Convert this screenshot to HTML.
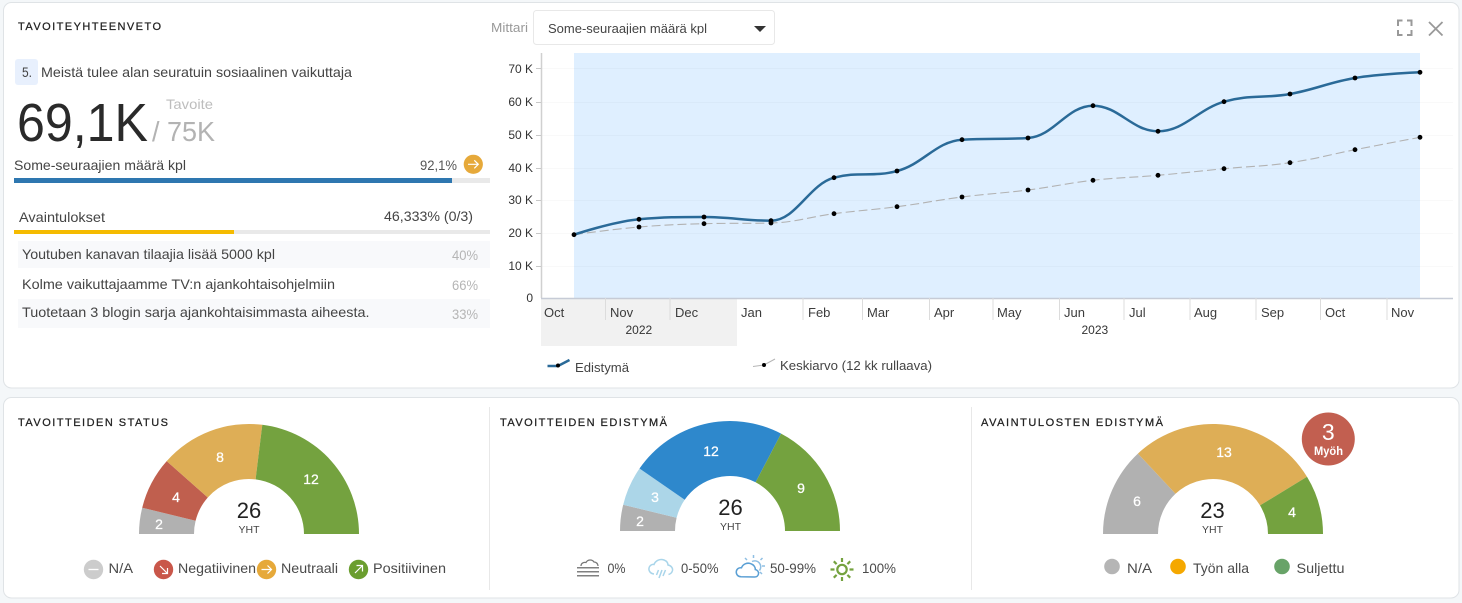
<!DOCTYPE html>
<html lang="fi"><head><meta charset="utf-8"><title>Tavoiteyhteenveto</title>
<style>
html,body{margin:0;padding:0;background:#f4f7f9;width:1462px;height:603px;overflow:hidden}
svg{display:block;position:absolute;left:0;top:0}
text{font-family:"Liberation Sans",Arial,sans-serif;fill:#444;font-size:14px}
.h{font-size:11px;fill:#222;stroke:#222;stroke-width:.25}
.m{font-size:13px;fill:#3c3c3c}
.y{font-size:12px;fill:#333;text-anchor:end}
.yr{font-size:12px;fill:#333}
.g{font-size:14px;fill:#fff;text-anchor:middle;stroke:#fff;stroke-width:.25}
.c{font-size:22px;fill:#222;text-anchor:middle}
.t{font-size:10.5px;fill:#444;text-anchor:middle}
.p{font-size:14px;fill:#b5b5b5}
.l{font-size:14px;fill:#4a4a4a}
</style></head><body>
<svg width="1462" height="603" viewBox="0 0 1462 603" xmlns="http://www.w3.org/2000/svg">
<defs><clipPath id="sel"><rect x="534" y="11" width="240" height="23.5"/></clipPath></defs>
<rect x="3.5" y="2.5" width="1455.5" height="385.5" rx="8" fill="#fff" stroke="#dfe3e6"/>
<rect x="3.5" y="397.5" width="1455.5" height="200.5" rx="8" fill="#fff" stroke="#dfe3e6"/>

<text class="h" x="18" y="30" textLength="143" lengthAdjust="spacing">TAVOITEYHTEENVETO</text>
<rect x="15" y="59" width="23" height="26" rx="3" fill="#e8f0fd"/>
<text x="22" y="77" textLength="10" lengthAdjust="spacingAndGlyphs">5.</text>
<text x="41" y="77" textLength="311" lengthAdjust="spacingAndGlyphs">Meistä tulee alan seuratuin sosiaalinen vaikuttaja</text>
<text x="17" y="141" style="font-size:54px;fill:#2a2a2a" textLength="131" lengthAdjust="spacingAndGlyphs">69,1K</text>
<text x="166" y="109" style="fill:#bdbdbd" textLength="47" lengthAdjust="spacingAndGlyphs">Tavoite</text>
<text x="152" y="141" style="font-size:28px;fill:#b3b3b3" textLength="63" lengthAdjust="spacingAndGlyphs">/ 75K</text>
<text x="14" y="170" textLength="172" lengthAdjust="spacingAndGlyphs">Some-seuraajien määrä kpl</text>
<text x="420" y="170" style="fill:#555" textLength="37" lengthAdjust="spacingAndGlyphs">92,1%</text>
<circle cx="473.3" cy="164.3" r="9.6" fill="#e6a93a"/>
<path d="M468 164.3h10M474.3 160.3l4 4-4 4" fill="none" stroke="#fff" stroke-width="1.2"/>
<rect x="14" y="178" width="476" height="5" fill="#e9e9e9"/>
<rect x="14" y="178" width="438" height="5" fill="#2e77b0"/>

<text x="19" y="222" textLength="86" lengthAdjust="spacingAndGlyphs">Avaintulokset</text>
<text x="384" y="221" textLength="89" lengthAdjust="spacingAndGlyphs">46,333% (0/3)</text>
<rect x="14" y="230" width="476" height="4" fill="#e9e9e9"/>
<rect x="14" y="230" width="220" height="4" fill="#f5bb00"/>
<rect x="18" y="241" width="472" height="27" fill="#f8f9fb"/>
<rect x="18" y="299" width="472" height="29" fill="#f8f9fb"/>
<text x="22" y="259" textLength="253" lengthAdjust="spacingAndGlyphs">Youtuben kanavan tilaajia lisää 5000 kpl</text>
<text x="22" y="289" textLength="313" lengthAdjust="spacingAndGlyphs">Kolme vaikuttajaamme TV:n ajankohtaisohjelmiin</text>
<text x="22" y="317" textLength="347.5" lengthAdjust="spacingAndGlyphs">Tuotetaan 3 blogin sarja ajankohtaisimmasta aiheesta.</text>
<text class="p" x="452" y="260" textLength="26" lengthAdjust="spacingAndGlyphs">40%</text>
<text class="p" x="452" y="290" textLength="26" lengthAdjust="spacingAndGlyphs">66%</text>
<text class="p" x="452" y="319" textLength="26" lengthAdjust="spacingAndGlyphs">33%</text>

<text x="491" y="32" style="font-size:13px;fill:#999" textLength="37" lengthAdjust="spacingAndGlyphs">Mittari</text>
<rect x="533.5" y="10.5" width="241" height="34" rx="3" fill="#fff" stroke="#e8e8e8"/>
<text x="548" y="33" clip-path="url(#sel)" style="font-size:13px;fill:#444" textLength="159" lengthAdjust="spacingAndGlyphs">Some-seuraajien määrä kpl</text>
<path d="M754 26h12l-6 6z" fill="#333"/>
<path d="M1398 26v-5.500h4.500M1407 20.500h4.500V26M1411.500 30v5H1407M1402.500 35H1398V30" fill="none" stroke="#999" stroke-width="2"/>
<path d="M1429 22l13.500 13.500M1442.500 22L1429 35.500" fill="none" stroke="#999" stroke-width="1.800"/>

<!-- chart -->
<rect x="574" y="53" width="846" height="245" fill="#dfefff"/>
<g stroke="#000" stroke-opacity=".025" stroke-width="1">
<path d="M541 68.500H1453M541 102.500H1453M541 135.500H1453M541 168.500H1453M541 200.500H1453M541 233.500H1453M541 266.500H1453"/>
</g>
<rect x="541" y="299" width="196" height="47" fill="#f1f1f1"/>
<path d="M541.500 53V298" stroke="#d0d0d0" stroke-width="1.500"/>
<path d="M536 68.500h5M536 102.500h5M536 135.500h5M536 168.500h5M536 200.500h5M536 233.500h5M536 266.500h5" stroke="#c8c8c8"/>
<path d="M541 298.500H1453" stroke="#c6cbd6" stroke-width="1.500"/>
<path d="M605.500 298v22M670 298v22M803 298v22M862.500 298v22M929.500 298v22M993 298v22M1059.500 298v22M1124 298v22M1190 298v22M1256 298v22M1320.500 298v22M1387 298v22" stroke="#dcdcdc" stroke-width="1"/>

<g>
<text class="y" x="533" y="73">70 K</text><text class="y" x="533" y="106">60 K</text><text class="y" x="533" y="139">50 K</text><text class="y" x="533" y="172">40 K</text><text class="y" x="533" y="204">30 K</text><text class="y" x="533" y="237">20 K</text><text class="y" x="533" y="270">10 K</text><text class="y" x="533" y="302">0</text>
<text class="m" x="544" y="317">Oct</text><text class="m" x="610" y="317">Nov</text><text class="m" x="675" y="317">Dec</text><text class="m" x="741" y="317">Jan</text><text class="m" x="808" y="317">Feb</text><text class="m" x="867" y="317">Mar</text><text class="m" x="934" y="317">Apr</text><text class="m" x="997" y="317">May</text><text class="m" x="1064" y="317">Jun</text><text class="m" x="1129" y="317">Jul</text><text class="m" x="1194" y="317">Aug</text><text class="m" x="1261" y="317">Sep</text><text class="m" x="1325" y="317">Oct</text><text class="m" x="1391" y="317">Nov</text>
<text class="yr" x="625.500" y="334">2022</text><text class="yr" x="1081.500" y="334">2023</text>
</g>

<path fill="none" stroke="#b2b2b2" stroke-width="1.100" stroke-dasharray="9 4" d="M574 234.700C574 234.700 613 229.200 639 227C665 224.800 678 224.400 704 223.700C730 223 745 223.700 771 223C796 222.300 809 217 834 213.700C859 210.400 872 210 897 206.700C923 203.400 936 200.300 962 197C988 193.700 1002 193.300 1028 190C1054 186.700 1067 183.200 1093 180.300C1119 177.400 1132 177.600 1158 175.300C1184 173 1198 171.200 1224 168.700C1250 166.200 1264 166.500 1290 162.700C1316 158.900 1329 154.800 1355 149.700C1381 144.600 1420 137.300 1420 137.300"/>
<path fill="none" stroke="#2a6a98" stroke-width="2.500" d="M574 234.700C574 234.700 613 221.600 639 219.300C665 217 678 217 704 217C730 217 745 220.700 771 220.700C796 220.700 809 184.400 834 177.700C859 171 872 177.700 897 171C923 164.300 936 141.400 962 139.700C988 138 1002 139.700 1028 138C1054 136.300 1067 105.700 1093 105.700C1119 105.700 1132 131.300 1158 131.300C1184 131.300 1198 109.200 1224 101.700C1250 94.200 1264 98.700 1290 94C1316 89.300 1329 82.300 1355 78C1381 73.700 1420 72.300 1420 72.300"/>
<g fill="#000">
<circle cx="574" cy="234.700" r="2.400"/><circle cx="639" cy="227" r="2.400"/><circle cx="704" cy="223.700" r="2.400"/><circle cx="771" cy="223" r="2.400"/><circle cx="834" cy="213.700" r="2.400"/><circle cx="897" cy="206.700" r="2.400"/><circle cx="962" cy="197" r="2.400"/><circle cx="1028" cy="190" r="2.400"/><circle cx="1093" cy="180.300" r="2.400"/><circle cx="1158" cy="175.300" r="2.400"/><circle cx="1224" cy="168.700" r="2.400"/><circle cx="1290" cy="162.700" r="2.400"/><circle cx="1355" cy="149.700" r="2.400"/><circle cx="1420" cy="137.300" r="2.400"/>
<circle cx="639" cy="219.300" r="2.400"/><circle cx="704" cy="217" r="2.400"/><circle cx="771" cy="220.700" r="2.400"/><circle cx="834" cy="177.700" r="2.400"/><circle cx="897" cy="171" r="2.400"/><circle cx="962" cy="139.700" r="2.400"/><circle cx="1028" cy="138" r="2.400"/><circle cx="1093" cy="105.700" r="2.400"/><circle cx="1158" cy="131.300" r="2.400"/><circle cx="1224" cy="101.700" r="2.400"/><circle cx="1290" cy="94" r="2.400"/><circle cx="1355" cy="78" r="2.400"/><circle cx="1420" cy="72.300" r="2.400"/>
</g>

<path d="M547.500 366H558L569.500 360" fill="none" stroke="#2a6a98" stroke-width="2.500"/><circle cx="558" cy="365.500" r="2" fill="#000"/>
<text x="575" y="372" style="font-size:13px" textLength="54" lengthAdjust="spacingAndGlyphs">Edistymä</text>
<path d="M753 366.500L764 365L775 359" fill="none" stroke="#b5b5b5" stroke-width="1"/><circle cx="764" cy="365" r="2" fill="#000"/>
<text x="780" y="370" style="font-size:13px" textLength="152" lengthAdjust="spacingAndGlyphs">Keskiarvo (12 kk rullaava)</text>

<!-- separators -->
<path d="M489.500 407V590M971.500 407V590" stroke="#e8e8e8"/>

<!-- gauge 1 -->
<text class="h" x="18" y="426" textLength="150" lengthAdjust="spacing">TAVOITTEIDEN STATUS</text>
<path fill="#b1b1b1" d="M139 534A110 110 0 0 1 142.200 507.700L195.600 520.800A55 55 0 0 0 194 534Z"/>
<path fill="#c05f4e" d="M142.200 507.700A110 110 0 0 1 166.700 461.100L207.800 497.500A55 55 0 0 0 195.600 520.800Z"/>
<path fill="#deae56" d="M166.700 461.100A110 110 0 0 1 262.300 424.800L255.600 479.400A55 55 0 0 0 207.800 497.500Z"/>
<path fill="#74a23f" d="M262.300 424.800A110 110 0 0 1 359 534H304A55 55 0 0 0 255.600 479.400Z"/>
<text class="g" x="159" y="529">2</text><text class="g" x="176" y="502">4</text><text class="g" x="220" y="462">8</text><text class="g" x="311" y="484">12</text>
<text class="c" x="249" y="518">26</text><text class="t" x="249" y="533">YHT</text>

<circle cx="93.500" cy="569.500" r="9.700" fill="#ccc"/><path d="M88.500 569.500h10" stroke="#fff" stroke-width="1.300"/>
<text class="l" x="108.500" y="573" textLength="24.500" lengthAdjust="spacingAndGlyphs">N/A</text>
<circle cx="163.500" cy="569.500" r="9.700" fill="#c9574a"/><path d="M160 566l7 7M167.500 568v5.500H162" fill="none" stroke="#fff" stroke-width="1.200"/>
<text class="l" x="178" y="573" textLength="78" lengthAdjust="spacingAndGlyphs">Negatiivinen</text>
<circle cx="266.500" cy="569.500" r="9.700" fill="#e6a93a"/><path d="M261.500 569.500h10M267.500 565.500l4 4-4 4" fill="none" stroke="#fff" stroke-width="1.200"/>
<text class="l" x="281" y="573" textLength="57" lengthAdjust="spacingAndGlyphs">Neutraali</text>
<circle cx="358.500" cy="569.500" r="9.700" fill="#6b9e2f"/><path d="M355 573l7-7M356.500 565.500h6V571.500" fill="none" stroke="#fff" stroke-width="1.200"/>
<text class="l" x="373" y="573" textLength="73" lengthAdjust="spacingAndGlyphs">Positiivinen</text>

<!-- gauge 2 -->
<text class="h" x="500" y="426" textLength="167" lengthAdjust="spacing">TAVOITTEIDEN EDISTYMÄ</text>
<path fill="#b1b1b1" d="M620 531A110 110 0 0 1 623.200 504.700L676.600 517.800A55 55 0 0 0 675 531Z"/>
<path fill="#acd6e8" d="M623.200 504.700A110 110 0 0 1 639.500 468.500L684.700 499.800A55 55 0 0 0 676.600 517.800Z"/>
<path fill="#2e88cc" d="M639.500 468.500A110 110 0 0 1 781.100 433.600L755.600 482.300A55 55 0 0 0 684.700 499.800Z"/>
<path fill="#74a23f" d="M781.100 433.600A110 110 0 0 1 840 531H785A55 55 0 0 0 755.600 482.300Z"/>
<text class="g" x="640" y="526">2</text><text class="g" x="655" y="502">3</text><text class="g" x="711" y="456">12</text><text class="g" x="801" y="493">9</text>
<text class="c" x="730.500" y="515">26</text><text class="t" x="730.500" y="530">YHT</text>

<g fill="none">
<path d="M581 566C581 563 584 562 586 562.500C587.500 559.500 592 559 594 562C596.500 562 598 564 598 566" stroke="#777" stroke-width="1.300"/>
<path d="M577 567.700H599M577 571.700H599M577 575.700H599" stroke="#808080" stroke-width="1.500"/>
</g>
<text class="l" style="font-size:13.500px" x="607.500" y="573" textLength="18" lengthAdjust="spacingAndGlyphs">0%</text>
<g fill="none" stroke="#a9d5ea" stroke-width="1.500">
<path d="M654 574C650 573.500 648.500 570.500 649 568C649.500 565.500 652 564 654 564.500C655.500 560.500 660 558.500 664 560C666.500 561 668 563 668 565C671 565.500 673 568 672.500 570.500C672 572.500 670.500 574 668.500 574.500"/>
<path d="M658.500 570l-2 5M662 570l-3 8M665.500 570l-2.500 6"/>
</g>
<text class="l" x="681" y="573" textLength="37.500" lengthAdjust="spacingAndGlyphs">0-50%</text>
<g fill="none">
<path d="M752 561.500a6 6 0 0 1 7.500 9M753.500 558v-3M747 560l-2-2M760.500 560l2-2M762 566h3M760 572l2 2" stroke="#8fbfe3" stroke-width="1.500"/>
<path d="M741 576.800C737.500 576.500 736 574 736.300 571.500C736.600 569 739 567.300 741.500 567.800C743 564 747.500 562 751.500 564C754 565 755.500 567.500 755.300 569.500C757.500 570 759 572 758.500 574C758 576 756.500 577 754.500 577Z" stroke="#5a9fd4" stroke-width="1.500" fill="#fff"/>
</g>
<text class="l" x="770" y="573" textLength="46" lengthAdjust="spacingAndGlyphs">50-99%</text>
<g fill="none" stroke="#74a23f" stroke-width="2.200">
<circle cx="842" cy="569.500" r="4.700"/>
<path d="M842 558v4M842 577v4M830.500 569.500h4M849.500 569.500h4M833.800 561.300l2.800 2.800M847.400 574.900l2.800 2.800M850.200 561.300l-2.800 2.800M836.600 574.900l-2.800 2.800"/>
</g>
<text class="l" x="862" y="573" textLength="34" lengthAdjust="spacingAndGlyphs">100%</text>

<!-- gauge 3 -->
<text class="h" x="981" y="426" textLength="182" lengthAdjust="spacing">AVAINTULOSTEN EDISTYMÄ</text>
<path fill="#b1b1b1" d="M1103 534A110 110 0 0 1 1137.900 453.600L1175.500 493.800A55 55 0 0 0 1158 534Z"/>
<path fill="#deae56" d="M1137.900 453.600A110 110 0 0 1 1307 476.800L1260 505.400A55 55 0 0 0 1175.500 493.800Z"/>
<path fill="#74a23f" d="M1307 476.800A110 110 0 0 1 1323 534H1268A55 55 0 0 0 1260 505.400Z"/>
<text class="g" x="1137" y="506">6</text><text class="g" x="1224" y="457">13</text><text class="g" x="1292" y="517">4</text>
<text class="c" x="1212.500" y="518">23</text><text class="t" x="1212.500" y="533">YHT</text>
<circle cx="1328.300" cy="439" r="26.500" fill="#c25f50"/>
<text x="1328.300" y="440" style="font-size:23px;fill:#fff;text-anchor:middle">3</text>
<text x="1328.500" y="455" style="font-size:11.500px;fill:#fff;text-anchor:middle;font-weight:700" textLength="29" lengthAdjust="spacingAndGlyphs">Myöh</text>

<circle cx="1112" cy="566.500" r="7.800" fill="#b5b5b5"/>
<text class="l" x="1127" y="573" textLength="25" lengthAdjust="spacingAndGlyphs">N/A</text>
<circle cx="1178" cy="566.500" r="7.800" fill="#f5a800"/>
<text class="l" x="1193" y="573" textLength="56" lengthAdjust="spacingAndGlyphs">Työn alla</text>
<circle cx="1282" cy="566.500" r="7.800" fill="#68a368"/>
<text class="l" x="1296.500" y="573" textLength="48" lengthAdjust="spacingAndGlyphs">Suljettu</text>
</svg>
</body></html>
